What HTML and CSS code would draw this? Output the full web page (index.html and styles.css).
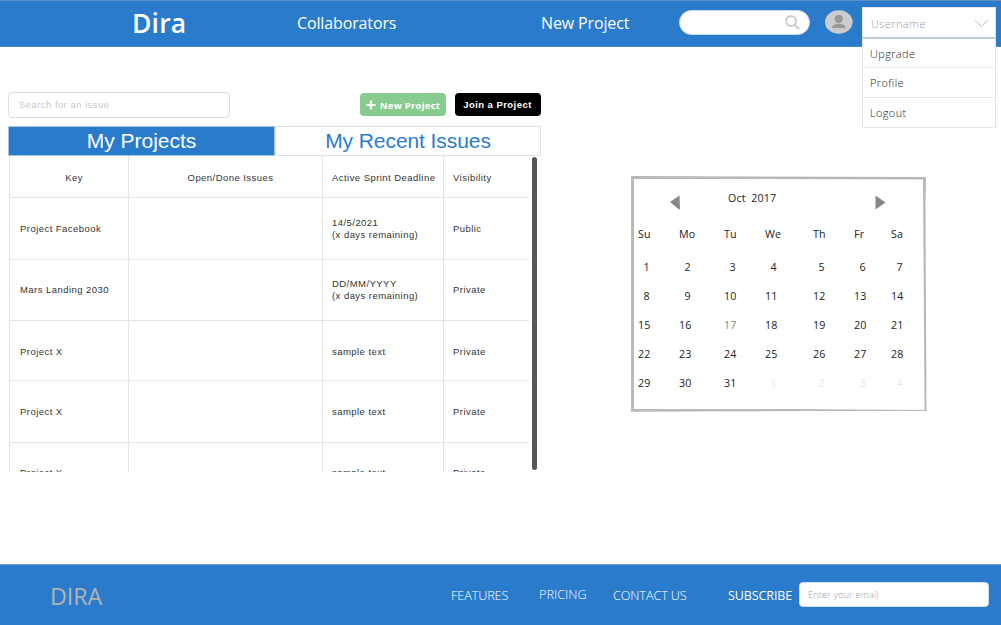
FILE: index.html
```
<!DOCTYPE html>
<html lang="en">
<head>
<meta charset="utf-8">
<title>Dira</title>
<link rel="stylesheet" href="styles.css">
</head>
<body>
<header class="topbar">
  <div class="brand">Dira</div>
  <a class="nav">Collaborators</a>
  <a class="nav">New Project</a>
  <div class="search">
    <svg width="17" height="17" viewBox="0 0 17 17"><circle cx="7" cy="7" r="5" fill="none" stroke="#ccc" stroke-width="1.9"/><path d="M10.6 10.6L15 15" stroke="#ccc" stroke-width="2.4"/></svg>
  </div>
  <svg class="avatar" width="28" height="24" viewBox="0 0 28 24"><ellipse cx="13.8" cy="12" rx="13.8" ry="11.8" fill="#ccc"/><circle cx="13.8" cy="9" r="4.2" fill="#999"/><path d="M7 18C7 15.2 9.5 14 13.8 14S20.600 15.200 20.600 18Z" fill="#999"/></svg>
  <div class="user">
    <div class="user-head"><span>Username</span>
      <svg width="15" height="9" viewBox="0 0 15 9"><path d="M.6 1L7.500 7.300L14.300 1" fill="none" stroke="#bbb" stroke-width="1"/></svg>
    </div>
    <div class="menu">
      <a class="menu-item">Upgrade</a>
      <a class="menu-item">Profile</a>
      <a class="menu-item">Logout</a>
    </div>
  </div>
</header>
<main class="content">
  <section class="board">
    <div class="tools">
      <div class="issue-search">Search for an issue</div>
      <a class="btn btn-new"><svg width="10" height="10" viewBox="0 0 10 10"><path d="M5 .5V9.500M.5 5H9.500" stroke="#fff" stroke-width="2.200"/></svg><span>New Project</span></a>
      <a class="btn btn-join">Join a Project</a>
    </div>
    <div class="tabs"><div class="tab active">My Projects</div><div class="tab">My Recent Issues</div></div>
    <div class="scroller">
      <div class="table">
        <div class="row head"><div class="cell mid">Key</div><div class="cell mid issues">Open/Done Issues</div><div class="cell">Active Sprint Deadline</div><div class="cell">Visibility</div></div>
        <div class="row r1"><div class="cell">Project Facebook</div><div class="cell"></div><div class="cell">14/5/2021<br>(x days remaining)</div><div class="cell">Public</div></div>
        <div class="row r2"><div class="cell">Mars Landing 2030</div><div class="cell"></div><div class="cell">DD/MM/YYYY<br>(x days remaining)</div><div class="cell">Private</div></div>
        <div class="row r3"><div class="cell">Project X</div><div class="cell"></div><div class="cell">sample text</div><div class="cell">Private</div></div>
        <div class="row r4"><div class="cell">Project X</div><div class="cell"></div><div class="cell">sample text</div><div class="cell">Private</div></div>
        <div class="row r5"><div class="cell">Project X</div><div class="cell"></div><div class="cell">sample text</div><div class="cell">Private</div></div>
      </div>
      <div class="scrollbar"></div>
    </div>
  </section>
  <section class="calendar">
    <svg class="frame" width="296" height="236" viewBox="0 0 296 236"><path fill="#b6babd" fill-rule="evenodd" d="M0 0L295 1L294.500 27L295.500 235L180 235L0 235.800ZM3 3V233L160 233L293.500 234L292 3.500L120 3Z"/></svg>
    <div class="cal-head">
      <svg width="10" height="15" viewBox="0 0 10 15"><path d="M0 7L9.500 .5L10 14.500L8.500 14Z" fill="#84888b"/></svg>
      <div class="month">Oct&nbsp; 2017</div>
      <svg width="11" height="15" viewBox="0 0 11 15"><path d="M.5 .5L10.500 7.500L.5 14.500Z" fill="#84888b"/></svg>
    </div>
    <div class="days names"><span>Su</span><span>Mo</span><span>Tu</span><span>We</span><span>Th</span><span>Fr</span><span>Sa</span></div>
    <div class="days single"><span>1</span><span>2</span><span>3</span><span>4</span><span>5</span><span>6</span><span>7</span></div>
    <div class="days"><span class="one">8</span><span class="one">9</span><span>10</span><span>11</span><span>12</span><span>13</span><span>14</span></div>
    <div class="days"><span>15</span><span>16</span><span class="today">17</span><span>18</span><span>19</span><span>20</span><span>21</span></div>
    <div class="days"><span>22</span><span>23</span><span>24</span><span>25</span><span>26</span><span>27</span><span>28</span></div>
    <div class="days"><span>29</span><span>30</span><span>31</span><span class="next">1</span><span class="next">2</span><span class="next">3</span><span class="next">4</span></div>
  </section>
</main>
<footer class="footer">
  <div class="foot-brand">DIRA</div>
  <a class="link">FEATURES</a>
  <a class="link pricing">PRICING</a>
  <a class="link contact">CONTACT US</a>
  <div class="link subscribe">SUBSCRIBE</div>
  <div class="email">Enter your email</div>
</footer>
</body>
</html>
```
FILE: styles.css
```
* { box-sizing: border-box; }
body {
  margin: 0;
  width: 1001px;
  height: 625px;
  overflow: hidden;
  display: flex;
  flex-direction: column;
  background: #fff;
  font-family: "Open Sans", sans-serif;
  color: #333;
}
svg { display: block; flex: none; }
.topbar {
  height: 47px;
  flex: none;
  display: grid;
  grid-template-columns: 165px 244px 138px 146px 37px 134px;
  padding-left: 132px;
  background: #2a7bcc;
  border-top: 1px solid #5c8ec2;
  border-bottom: 1px solid #4a8cd0;
  color: #fff;
  white-space: nowrap;
}
.brand { font-size: 26.500px; font-weight: 600; line-height: 45px; letter-spacing: .2px; }
.nav { font-size: 16px; line-height: 44px; letter-spacing: -.13px; }
.search {
  width: 131px;
  height: 25px;
  margin-top: 9px;
  padding: 3px 8px 0 0;
  display: flex;
  justify-content: flex-end;
  background: #fff;
  border: 1px solid #c9d9ea;
  border-radius: 13px;
}
.avatar { margin-top: 9px; }
.user { position: relative; z-index: 2; margin-top: 6px; }
.user-head {
  height: 32px;
  display: flex;
  align-items: center;
  justify-content: space-between;
  padding: 2px 6px 0 8px;
  background: #fff;
  border: 1px solid #e3e8ee;
  border-bottom: 2px solid #b9cde2;
  font-size: 11px;
  font-weight: 300;
  letter-spacing: .4px;
  color: #999;
}
.menu { position: absolute; top: 32px; left: 0; width: 134px; background: #fff; border: 1px solid #e6e6e6; border-top: 0; }
.menu-item {
  display: block;
  height: 29.300px;
  padding-left: 7px;
  line-height: 30px;
  border-bottom: 1px solid #e6e6e6;
  font-size: 11px;
  font-weight: 300;
  letter-spacing: .35px;
  color: #222;
}
.menu-item:last-child { border-bottom: 0; line-height: 29px; }
.content { flex: 1; display: flex; align-items: flex-start; padding-left: 8px; }
.board { width: 533px; margin-top: 45px; font-family: "Liberation Sans", sans-serif; }
.tools { display: flex; height: 34px; align-items: flex-start; }
.issue-search {
  width: 222px;
  height: 26px;
  padding-left: 10px;
  line-height: 24px;
  border: 1px solid #ddd;
  border-radius: 4px;
  font-size: 9.500px;
  letter-spacing: .45px;
  color: #c8c8c8;
}
.btn {
  width: 86px;
  height: 23px;
  margin-top: 1px;
  border-radius: 4px;
  display: flex;
  align-items: center;
  justify-content: center;
  color: #fff;
  font-weight: 700;
  font-size: 9.500px;
  white-space: nowrap;
}
.btn-new { margin-left: 130px; gap: 4px; background: #87cb8f; font-family: "Open Sans", sans-serif; letter-spacing: .25px; }
.btn-new span { padding-top: 1px; }
.btn-join { margin-left: 8.500px; background: #000; letter-spacing: .45px; }
.tabs { display: flex; height: 30px; }
.tab {
  flex: 1;
  border: 1px solid #e2e2e2;
  text-align: center;
  font-size: 21px;
  line-height: 28px;
  letter-spacing: -.08px;
  color: #2a7bcc;
}
.tab.active { flex: none; width: 267px; background: #2a7bcc; border-color: #a9c3dd; color: #fff; letter-spacing: 0; }
.scroller { display: flex; height: 316px; overflow: hidden; }
.table { width: 521px; padding-left: 1px; }
.row { display: grid; grid-template-columns: 120px 194px 121px 85px; }
.head { height: 42px; }
.r1 { height: 62px; }
.r2 { height: 61px; }
.r3 { height: 60px; }
.r4 { height: 62px; }
.r5 { height: 61px; }
.cell {
  display: flex;
  align-items: center;
  padding: 0 0 0 9px;
  border-right: 1px solid #e4e4e4;
  border-bottom: 1px solid #e4e4e4;
  font-size: 9.500px;
  line-height: 12px;
  letter-spacing: .45px;
  white-space: nowrap;
}
.cell:first-child { border-left: 1px solid #e4e4e4; padding-left: 10px; }
.cell:last-child { border-right: 0; }
.head .cell { padding-top: 3px; }
.r3 .cell { padding-top: 2px; }
.cell.mid { justify-content: center; padding-left: 10px; }
.scrollbar { width: 5px; height: 313px; margin: 1px 0 0 3px; border-radius: 3px; background: #55585b; }
.calendar { position: relative; width: 296px; height: 236px; margin: 129px 0 0 90px; font-size: 10.700px; color: #222; }
.frame { position: absolute; top: 0; left: 0; }
.cal-head { display: flex; align-items: flex-start; padding: 19px 0 0 39px; height: 42px; }
.month { width: 195px; padding-left: 48px; line-height: 6px; letter-spacing: .1px; }
.days { display: grid; grid-template-columns: 41px 45px 41px 48px 41px 37px 20px; height: 29px; padding-left: 7px; line-height: 30px; }
.days span { width: 12.700px; text-align: right; letter-spacing: .2px; }
.days.single span, .days .one, .days .next { padding-right: 1px; }
.days.names { height: 34px; line-height: 32px; }
.names span { text-align: left; letter-spacing: .2px; }
.days .today { color: #888; }
.days .next { color: #e8e8e8; }
.footer {
  height: 61px;
  flex: none;
  display: grid;
  grid-template-columns: 401px 88px 74px 115px 71px 190px;
  padding-left: 50px;
  background: #2a7bcc;
  border-top: 1px solid #6ea0d2;
  color: #fff;
  white-space: nowrap;
}
.foot-brand { font-size: 23.300px; line-height: 62px; color: #b3b3b3; font-weight: 400; letter-spacing: -.1px; }
.link { font-size: 12.700px; font-weight: 300; line-height: 61px; letter-spacing: -.12px; }
.pricing { line-height: 59px; letter-spacing: 0; }
.subscribe { font-weight: 400; font-size: 12.500px; letter-spacing: -.1px; }
.email {
  height: 25px;
  margin-top: 17px;
  padding-left: 8px;
  line-height: 23px;
  background: #fff;
  border: 1px solid #d5dde6;
  border-radius: 4px;
  font-size: 9px;
  letter-spacing: .27px;
  font-weight: 300;
  color: #999;
}
```
